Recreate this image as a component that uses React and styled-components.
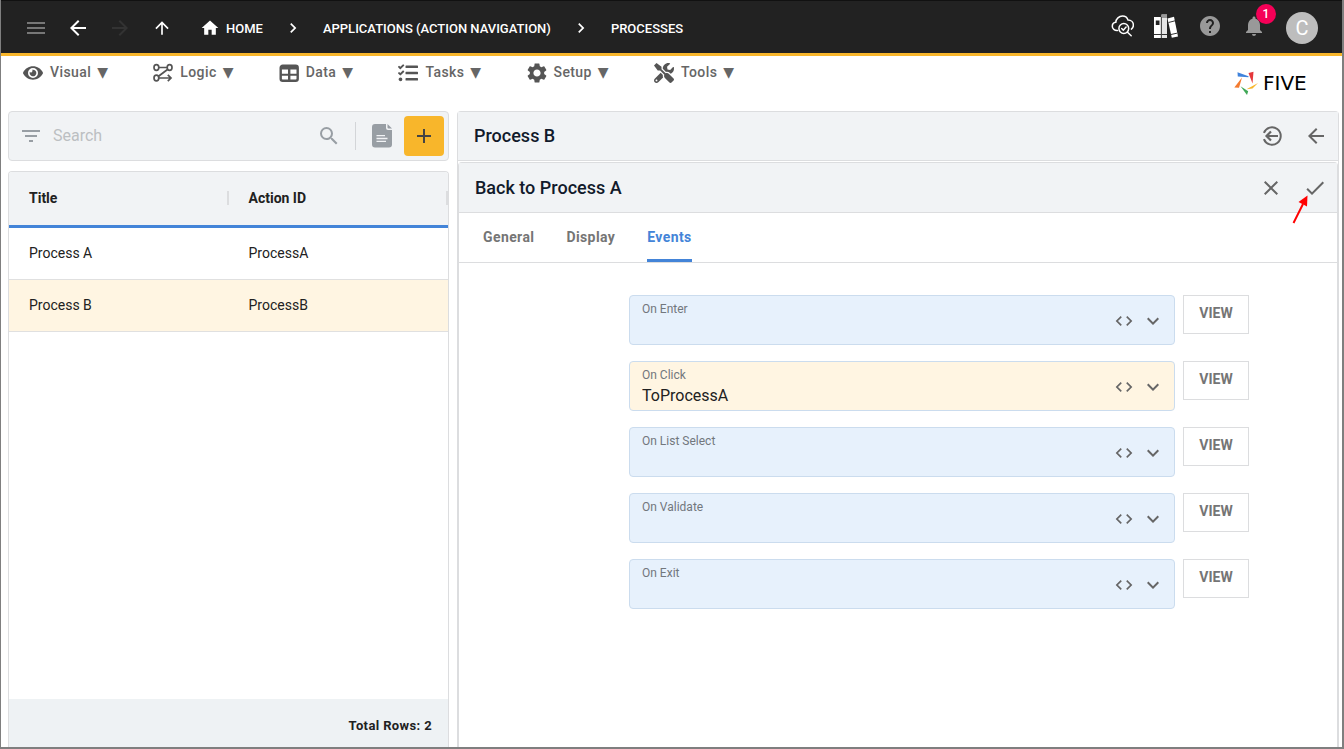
import { useState } from "react";
import styled, { createGlobalStyle } from "styled-components";
import {
  MdAdd,
  MdArrowBack,
  MdArrowForward,
  MdArrowUpward,
  MdCheck,
  MdChevronRight,
  MdClose,
  MdCode,
  MdExpandMore,
  MdFilterList,
  MdHelp,
  MdHome,
  MdMenu,
  MdNotifications,
  MdSearch,
  MdSettings,
} from "react-icons/md";
import { FaEye, FaTasks, FaTools } from "react-icons/fa";

const GlobalStyle = createGlobalStyle`
  * {
    box-sizing: border-box;
  }
  body {
    margin: 0;
    background-color: white;
    font-family: Roboto, sans-serif;
    font-size: 14px;
    color: #212121;
  }
  button, input, select {
    font-family: inherit;
  }
`;

const Page = styled.div`
  display: flex;
  flex-direction: column;
  min-height: 100vh;
  border: solid #7f7f7f;
  border-width: 0 2px 2px 1px;
`;

const TopBar = styled.header`
  display: flex;
  align-items: center;
  justify-content: space-between;
  height: 56px;
  padding: 2px 24px 0 23px;
  background-color: #222;
  border-top: 1px solid #111;
  border-bottom: 3px solid #f8b62b;
`;

const BarGroup = styled.div`
  display: flex;
  align-items: center;
`;

const IconButton = styled.button`
  display: flex;
  align-items: center;
  justify-content: center;
  width: 24px;
  height: 24px;
  padding: 0;
  border: none;
  background-color: transparent;
  color: ${(props) => props.$color || "#666"};
  cursor: pointer;
`;

const History = styled.nav`
  display: flex;
  gap: 18px;
  margin-right: 26px;
`;

const Breadcrumbs = styled.nav`
  display: flex;
  align-items: center;
  gap: 20px;
  color: white;
  a {
    display: flex;
    align-items: center;
    gap: 6px;
    color: white;
    font-size: 13px;
    font-weight: 500;
    text-decoration: none;
  }
`;

const StatusIcons = styled.div`
  display: flex;
  align-items: center;
  gap: 20px;
  margin-right: 20px;
  padding-bottom: 4px;
`;

const BellWrap = styled.div`
  position: relative;
`;

const Badge = styled.span`
  position: absolute;
  top: -10px;
  right: -10px;
  width: 20px;
  height: 20px;
  border-radius: 50%;
  background-color: #f50057;
  color: white;
  font-size: 12px;
  font-weight: 500;
  line-height: 20px;
  text-align: center;
`;

const Avatar = styled.div`
  width: 32px;
  height: 32px;
  border-radius: 50%;
  background-color: #bdbdbd;
  color: white;
  font-size: 20px;
  line-height: 32px;
  text-align: center;
`;

const MenuBar = styled.div`
  display: flex;
  justify-content: space-between;
  height: 55px;
  padding: 4px 20px 0 22px;
`;

const Menus = styled.nav`
  display: flex;
  align-items: flex-start;
  gap: 45px;
`;

const MenuButton = styled.button`
  display: flex;
  align-items: center;
  gap: 7px;
  height: 26px;
  padding: 0;
  border: none;
  background-color: transparent;
  color: #666;
  font-size: 14px;
  font-weight: 500;
  letter-spacing: 0.02857em;
  white-space: nowrap;
  cursor: pointer;
  svg {
    color: #555;
  }
`;

const MenuLabel = styled.span`
  display: flex;
  gap: 6px;
  padding-bottom: 2px;
  font-family: Roboto, "DejaVu Sans", sans-serif;
`;

const Brand = styled.a`
  display: flex;
  align-items: center;
  align-self: flex-start;
  gap: 5px;
  width: 88px;
  height: 26px;
  margin-top: 10px;
  color: black;
  font-family: "DejaVu Sans", sans-serif;
  font-size: 20px;
  text-decoration: none;
`;

const Main = styled.main`
  flex: 1;
  display: grid;
  grid-template-columns: minmax(0, 1fr) minmax(0, 2fr);
  gap: 8px;
  padding: 0 3px 0 7px;
`;

const ListPane = styled.section`
  display: flex;
  flex-direction: column;
  gap: 10px;
`;

const SearchBar = styled.div`
  display: flex;
  align-items: center;
  height: 50px;
  padding: 0 4px 0 10px;
  border: 1px solid #dcdddf;
  border-radius: 4px;
  background-color: #f1f3f5;
`;

const SearchInput = styled.input`
  flex: 1;
  min-width: 0;
  padding: 0 0 2px 0;
  margin-left: 10px;
  border: none;
  outline: none;
  background-color: transparent;
  font-size: 16px;
  &::placeholder {
    color: #bcbfc2;
  }
`;

const Divider = styled.span`
  width: 1px;
  height: 28px;
  margin: 0 14px;
  background-color: #d3d5d8;
`;

const AddButton = styled.button`
  display: flex;
  align-items: center;
  justify-content: center;
  width: 40px;
  height: 40px;
  margin-left: 10px;
  padding: 0;
  border: none;
  border-radius: 4px;
  background-color: #f8b62b;
  color: #444;
  cursor: pointer;
`;

const TableCard = styled.div`
  flex: 1;
  display: flex;
  flex-direction: column;
  justify-content: space-between;
  border: 1px solid #dcdddf;
  border-bottom: none;
  border-radius: 4px 4px 0 0;
  overflow: hidden;
`;

const Table = styled.table`
  width: 100%;
  border-collapse: separate;
  border-spacing: 0;
  table-layout: fixed;
  th,
  td {
    padding: 0 20px 2px 20px;
    text-align: left;
  }
  th {
    height: 56px;
    border-bottom: 3px solid #4384d8;
    background-color: #f1f3f5;
    font-weight: 700;
  }
  td {
    height: 52px;
    border-bottom: 1px solid #e0e0e0;
  }
`;

const HeadCell = styled.div`
  display: flex;
  justify-content: space-between;
  align-items: center;
  margin-right: -20px;
  &::after {
    content: "";
    width: 2px;
    height: 14px;
    background-color: #dcdddf;
  }
`;

const Row = styled.tr`
  background-color: ${(props) => (props.$selected ? "#fff5e2" : "white")};
`;

const TableFooter = styled.div`
  height: 48px;
  padding: 4px 16px 0 16px;
  background-color: #eef2f4;
  font-size: 13px;
  font-weight: 700;
  letter-spacing: 0.02857em;
  line-height: 46px;
  text-align: right;
`;

const DetailPane = styled.section`
  display: flex;
  flex-direction: column;
  gap: 1px;
  border: 1px solid #dcdddf;
  border-bottom: none;
  border-radius: 4px 4px 0 0;
`;

const FormCard = styled.section`
  flex: 1;
  border: 1px solid #dcdddf;
  border-bottom: none;
  border-radius: 4px 4px 0 0;
`;

const PaneHeader = styled.div`
  position: relative;
  display: flex;
  align-items: center;
  justify-content: space-between;
  height: ${(props) => props.$height}px;
  padding: 0 10px 0 16px;
  border-bottom: 1px solid #dcdddf;
  background-color: #f1f3f5;
  h1,
  h2 {
    margin: 0;
    color: #111a2b;
    font-size: 18px;
    font-weight: 500;
    line-height: 24px;
  }
`;

const PaneActions = styled.div`
  display: flex;
  gap: 20px;
`;

const Pointer = styled.svg`
  position: absolute;
  top: 30px;
  right: 26px;
  pointer-events: none;
`;

const Tabs = styled.div`
  display: flex;
  gap: 32px;
  height: 50px;
  padding: 0 24px;
  border-bottom: 1px solid #dcdddf;
`;

const Tab = styled.button`
  padding: 1px 0 0 0;
  border: none;
  border-bottom: 3px solid ${(props) => (props.$active ? "#4384d8" : "transparent")};
  background-color: transparent;
  color: ${(props) => (props.$active ? "#4384d8" : "#757575")};
  font-size: 14px;
  font-weight: 700;
  letter-spacing: 0.02857em;
  cursor: pointer;
`;

const Form = styled.form`
  display: flex;
  flex-direction: column;
  gap: 16px;
  padding: 32px 88px 32px 170px;
`;

const FieldRow = styled.div`
  display: flex;
  align-items: flex-start;
  gap: 8px;
`;

const Field = styled.div`
  flex: 1;
  display: flex;
  align-items: center;
  height: 50px;
  padding: 0 9px 0 12px;
  border: 1px solid #cbdcee;
  border-radius: 4px;
  background-color: ${(props) => (props.$filled ? "#fff5e2" : "#e7f1fc")};
`;

const FieldText = styled.div`
  flex: 1;
  display: flex;
  flex-direction: column;
  padding-top: 2px;
  label {
    color: #72777d;
    font-size: 12px;
    line-height: 18px;
  }
  select {
    appearance: none;
    height: 24px;
    padding: 0 0 2px 0;
    border: none;
    outline: none;
    background-color: transparent;
    color: #212121;
    font-size: 16px;
  }
`;

const FieldIcons = styled.div`
  display: flex;
  align-items: center;
  gap: 5px;
  padding-top: 2px;
  color: #666;
`;

const ViewButton = styled.button`
  width: 66px;
  height: 39px;
  padding: 0 0 4px 0;
  border: 1px solid #dcdddf;
  background-color: white;
  color: #757575;
  font-size: 14px;
  font-weight: 700;
  cursor: pointer;
`;

const LogicIcon = () => (
  <svg width="20" height="20" viewBox="0 0 20 20" fill="none" stroke="currentColor" strokeWidth="1.7">
    <ellipse cx="3.4" cy="4.5" rx="2.4" ry="2.8" />
    <ellipse cx="16.6" cy="4.5" rx="2.4" ry="2.8" />
    <ellipse cx="3.4" cy="15" rx="2.4" ry="2.8" />
    <path d="M6 4.5h8M14.5 6.5L5.5 13.2M6 15h11.5M14.8 11.8l3.2 3.2-3.2 3.2" />
  </svg>
);

const DataIcon = () => (
  <svg width="20" height="20" viewBox="0 0 20 20">
    <rect x="1.700" y="2.700" width="17" height="15" rx="2" fill="none" stroke="currentColor" strokeWidth="2.400" />
    <path d="M1 3h18v3.500H1zM9 6h2.400v12H9zM1 10.700h18v2H1z" fill="currentColor" />
  </svg>
);

const CloudCheckIcon = () => (
  <svg width="24" height="24" viewBox="-1 0 24 24" fill="none" stroke="white" strokeWidth="1.5" strokeLinecap="round">
    <path d="M6.500 16.500C3.500 16.700 1.300 14.900 1.300 12.300c0-2.200 1.500-3.800 3.500-4C5 4.900 8 2 11.500 2c2.600 0 4.700 1.600 5.500 3.900 3.200 0 5.400 2.300 5.400 5.200 0 1.700-.8 3.100-2 4" />
    <circle cx="12.800" cy="14.500" r="4.900" />
    <path d="M16.500 18.200l3.700 3.500M10.700 14.500l1.600 1.700 2.800-3.200" />
  </svg>
);

const BooksIcon = () => (
  <svg width="24" height="26" viewBox="0 0 24 26">
    <path d="M0 4h7v21H0z" fill="white" />
    <path d="M7.500 1.500H13V25H7.500z" fill="#e6e6e6" />
    <path d="M7.500 1.500H13V5H7.500z" fill="#999" />
    <path d="M13.500 5.500l6.500-1.700 4 19.700-6.200 1.300z" fill="white" />
    <path d="M1.800 7.500h3.700v4.500H1.800z" fill="#222" />
    <path d="M0 21.500h13M14.500 9.500l6.500-1.700M17 21.500l6.300-1.400" stroke="#333" />
    <path d="M7.300 4v21" stroke="#444" />
  </svg>
);

const DocumentIcon = () => (
  <svg width="22" height="26" viewBox="0 0 22 26">
    <path d="M4 1h11v4a2 2 0 0 0 2 2h4v14.500a3 3 0 0 1-3 3H4a3 3 0 0 1-3-3V4a3 3 0 0 1 3-3z" fill="#989ea4" />
    <path d="M16.500 1L21 5.500h-3.500a1 1 0 0 1-1-1z" fill="#989ea4" />
    <path d="M5.500 12.700h8.500M5.500 15.500h11M5.500 18.300h9.500" stroke="#f1f3f5" strokeWidth="1.300" />
  </svg>
);

const ReturnIcon = () => (
  <svg width="24" height="24" viewBox="0 0 24 24" fill="none" stroke="currentColor" strokeWidth="2">
    <path d="M3.900 8.900A8.700 8.700 0 1 1 3.900 15.100" />
    <path d="M18 12H7M11 7.500L6.500 12l4.500 4.500" strokeWidth="2.200" />
  </svg>
);

const BrandMark = () => (
  <svg width="24" height="24" viewBox="0 0 24 24">
    <path d="M3.500 1.300L14.500 5.200L14.500 6.200L3.800 5.500z" fill="#3f83dc" />
    <path d="M19.500 .8L18.500 12.500L14.500 2z" fill="#e5383b" />
    <path d="M24 12L18.500 17.500L12.500 18.200z" fill="#f8b62b" />
    <path d="M6.500 15.200L14.200 20.200L13 24z" fill="#40a857" />
    <path d="M8 6.500L5 16.800L.3 16.500z" fill="#f47b30" />
  </svg>
);

const menus = [
  { name: "Visual", icon: <FaEye size={20} /> },
  { name: "Logic", icon: <LogicIcon /> },
  { name: "Data", icon: <DataIcon /> },
  { name: "Tasks", icon: <FaTasks size={20} /> },
  { name: "Setup", icon: <MdSettings size={20} viewBox="2 2 20 20" /> },
  { name: "Tools", icon: <FaTools size={20} /> },
];

const rows = [
  { title: "Process A", actionId: "ProcessA" },
  { title: "Process B", actionId: "ProcessB" },
];

const events = [
  { id: "onEnter", label: "On Enter", value: "" },
  { id: "onClick", label: "On Click", value: "ToProcessA" },
  { id: "onListSelect", label: "On List Select", value: "" },
  { id: "onValidate", label: "On Validate", value: "" },
  { id: "onExit", label: "On Exit", value: "" },
];

const EventField = ({ id, label, value }) => {
  const [selected, setSelected] = useState(value);
  return (
    <FieldRow>
      <Field $filled={selected !== ""}>
        <FieldText>
          <label htmlFor={id}>{label}</label>
          <select id={id} value={selected} onChange={(e) => setSelected(e.target.value)}>
            <option value=""></option>
            <option value="ToProcessA">ToProcessA</option>
          </select>
        </FieldText>
        <FieldIcons>
          <IconButton type="button" aria-label={`Edit ${label} code`}>
            <MdCode size={20} />
          </IconButton>
          <MdExpandMore size={24} />
        </FieldIcons>
      </Field>
      <ViewButton type="button">VIEW</ViewButton>
    </FieldRow>
  );
};

const App = () => {
  const [tab, setTab] = useState("Events");

  return (
    <>
      <GlobalStyle />
      <Page>
        <TopBar>
          <BarGroup>
            <History>
              <IconButton $color="#777" aria-label="Menu">
                <MdMenu size={24} />
              </IconButton>
              <IconButton $color="white" aria-label="Back">
                <MdArrowBack size={24} />
              </IconButton>
              <IconButton $color="#333" aria-label="Forward">
                <MdArrowForward size={24} />
              </IconButton>
              <IconButton $color="white" aria-label="Up">
                <MdArrowUpward size={20} />
              </IconButton>
            </History>
            <Breadcrumbs>
              <a href="#home">
                <MdHome size={20} />
                HOME
              </a>
              <MdChevronRight size={20} />
              <a href="#applications">APPLICATIONS (ACTION NAVIGATION)</a>
              <MdChevronRight size={20} />
              <a href="#processes">PROCESSES</a>
            </Breadcrumbs>
          </BarGroup>
          <BarGroup>
            <StatusIcons>
              <IconButton aria-label="Inspect">
                <CloudCheckIcon />
              </IconButton>
              <IconButton aria-label="Library">
                <BooksIcon />
              </IconButton>
              <IconButton $color="#999" aria-label="Help">
                <MdHelp size={24} />
              </IconButton>
              <BellWrap>
                <IconButton $color="#999" aria-label="Notifications">
                  <MdNotifications size={24} />
                </IconButton>
                <Badge>1</Badge>
              </BellWrap>
            </StatusIcons>
            <Avatar>C</Avatar>
          </BarGroup>
        </TopBar>

        <MenuBar>
          <Menus>
            {menus.map((menu) => (
              <MenuButton key={menu.name}>
                {menu.icon}
                <MenuLabel>
                  {menu.name}
                  <span>▼</span>
                </MenuLabel>
              </MenuButton>
            ))}
          </Menus>
          <Brand href="#five">
            <BrandMark />
            FIVE
          </Brand>
        </MenuBar>

        <Main>
          <ListPane>
            <SearchBar>
              <IconButton $color="#989ea4" aria-label="Filter">
                <MdFilterList size={24} />
              </IconButton>
              <SearchInput type="text" placeholder="Search" aria-label="Search" />
              <IconButton $color="#989ea4" aria-label="Search">
                <MdSearch size={24} />
              </IconButton>
              <Divider />
              <IconButton aria-label="Report">
                <DocumentIcon />
              </IconButton>
              <AddButton aria-label="Add">
                <MdAdd size={24} />
              </AddButton>
            </SearchBar>
            <TableCard>
              <Table>
                <thead>
                  <tr>
                    <th>
                      <HeadCell>Title</HeadCell>
                    </th>
                    <th>
                      <HeadCell>Action ID</HeadCell>
                    </th>
                  </tr>
                </thead>
                <tbody>
                  {rows.map((row) => (
                    <Row key={row.actionId} $selected={row.actionId === "ProcessB"}>
                      <td>{row.title}</td>
                      <td>{row.actionId}</td>
                    </Row>
                  ))}
                </tbody>
              </Table>
              <TableFooter>Total Rows: {rows.length}</TableFooter>
            </TableCard>
          </ListPane>

          <DetailPane>
            <PaneHeader $height={49}>
              <h1>Process B</h1>
              <PaneActions>
                <IconButton aria-label="Return">
                  <ReturnIcon />
                </IconButton>
                <IconButton aria-label="Back to list">
                  <MdArrowBack size={24} />
                </IconButton>
              </PaneActions>
            </PaneHeader>
            <FormCard>
              <PaneHeader $height={50}>
                <h2>Back to Process A</h2>
                <PaneActions>
                  <IconButton aria-label="Cancel">
                    <MdClose size={24} />
                  </IconButton>
                  <IconButton aria-label="Save">
                    <MdCheck size={24} />
                  </IconButton>
                </PaneActions>
                <Pointer width="20" height="32" viewBox="0 0 20 32">
                  <path d="M2.500 30L12 11" stroke="red" strokeWidth="2" />
                  <path d="M16.500 2.500L16 13.500L7.500 9z" fill="red" />
                </Pointer>
              </PaneHeader>
              <Tabs role="tablist">
                {["General", "Display", "Events"].map((name) => (
                  <Tab
                    key={name}
                    role="tab"
                    aria-selected={tab === name}
                    $active={tab === name}
                    onClick={() => setTab(name)}
                  >
                    {name}
                  </Tab>
                ))}
              </Tabs>
              <Form>
                {events.map((event) => (
                  <EventField key={event.id} {...event} />
                ))}
              </Form>
            </FormCard>
          </DetailPane>
        </Main>
      </Page>
    </>
  );
};

export default App;
